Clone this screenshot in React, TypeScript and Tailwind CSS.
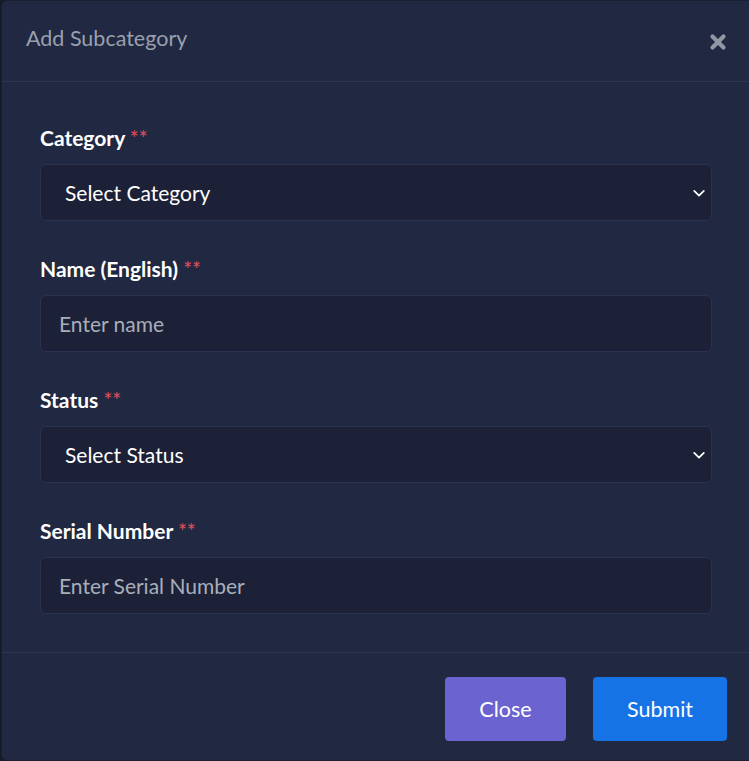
const FIELDS = [
  { label: 'Category', type: 'select' as const, text: 'Select Category' },
  { label: 'Name (English)', type: 'input' as const, text: 'Enter name' },
  { label: 'Status', type: 'select' as const, text: 'Select Status' },
  { label: 'Serial Number', type: 'input' as const, text: 'Enter Serial Number' },
]

function Chevron() {
  return (
    <svg width="14" height="14" viewBox="0 0 16 16" fill="none">
      <path d="M2.5 5.5L8 11l5.5-5.5" stroke="#ffffff" strokeWidth="2" strokeLinecap="round" strokeLinejoin="round" />
    </svg>
  )
}

export default function App() {
  return (
    <div
      className="h-[761px] w-[749px] overflow-hidden bg-[#161a28]"
      style={{ fontFamily: 'Lato, "Noto Sans", sans-serif' }}
    >
      <div className="ml-px flex h-[761px] w-[760px] flex-col rounded-md border border-[#1a1f31] bg-[#212842]">
        {/* header */}
        <div className="flex h-[81px] shrink-0 items-center justify-between border-b border-[#2e3650] pl-6 pr-[33px]">
          <h5 className="mt-[-6px] text-[21.5px] text-[#9aa0ad]">Add Subcategory</h5>
          <button className="mt-[2px]">
            <svg width="18" height="18" viewBox="0 0 18 18">
              <path d="M3.5 3.5L14.5 14.5M14.5 3.5L3.5 14.5" stroke="#9197a4" strokeWidth="4.2" strokeLinecap="round" />
            </svg>
          </button>
        </div>

        {/* body */}
        <div className="flex flex-col gap-[35px] pl-[38px] pr-[48px] pt-[43px]">
          {FIELDS.map((f) => (
            <div key={f.label} className="flex flex-col gap-[13px]">
              <label className="text-[21px] font-bold leading-[26px] text-white">
                {f.label} <span className="font-normal text-[#e0505c]">**</span>
              </label>
              {f.type === 'select' ? (
                <div className="flex h-[57px] w-[672px] items-center justify-between rounded-md border border-[#2b3250] bg-[#1c2137] pl-6 pr-[5px]">
                  <span className="text-[21px] text-white">{f.text}</span>
                  <Chevron />
                </div>
              ) : (
                <div className="flex h-[57px] w-[672px] items-center rounded-md border border-[#2b3250] bg-[#1c2137] pl-[18px]">
                  <span className="text-[21px] text-[#a9aebb]">{f.text}</span>
                </div>
              )}
            </div>
          ))}
        </div>

        {/* footer */}
        <div className="mt-[38px] flex justify-start gap-[27px] border-t border-[#2e3650] pl-[443px] pt-[24px]">
          <button className="h-[64px] w-[121px] rounded bg-[#6b63cf] text-[21.5px] text-white">Close</button>
          <button className="h-[64px] w-[134px] rounded bg-[#1673e6] text-[21.5px] text-white">Submit</button>
        </div>
      </div>
    </div>
  )
}
